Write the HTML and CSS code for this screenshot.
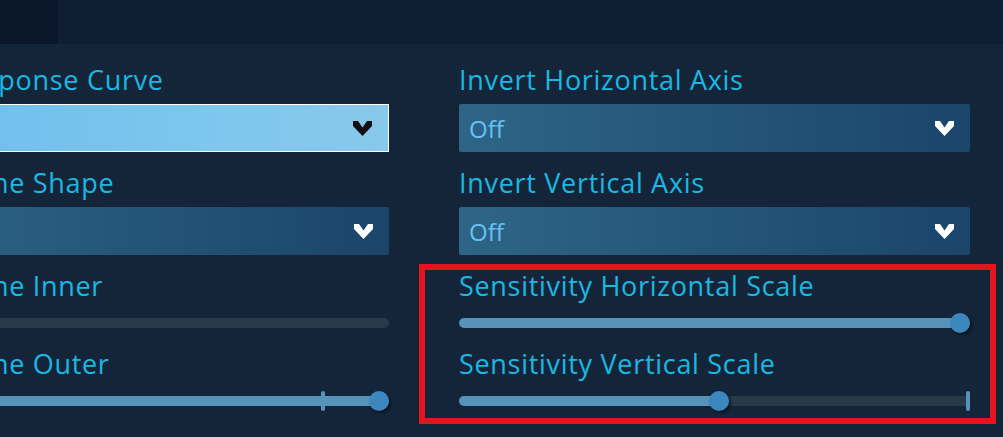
FILE: index.html
```html
<!DOCTYPE html>
<html lang="en">
  <head>
    <meta charset="UTF-8" />
    <title>Controller Settings</title>
    <link rel="stylesheet" href="styles.css">
  </head>
  <body>
    <div class="topbar">
      <div class="tab"></div>
    </div>

    <div class="settings">
      <!-- Left column -->
      <div class="column left">
        <div class="field">
          <div class="field-label">Stick Response Curve</div>
          <div class="dropdown active">
            <span class="dropdown-value"></span>
            <svg class="chevron" width="19" height="15" viewBox="0 0 19 15"><polygon points="0,0 5,0 9.5,6.5 14,0 19,0 19,5 9.5,15 0,5" /></svg>
          </div>
        </div>
        <div class="field">
          <div class="field-label">Dead Zone Shape</div>
          <div class="dropdown">
            <span class="dropdown-value"></span>
            <svg class="chevron" width="19" height="15" viewBox="0 0 19 15"><polygon points="0,0 5,0 9.5,6.5 14,0 19,0 19,5 9.5,15 0,5" /></svg>
          </div>
        </div>
        <div class="field">
          <div class="field-label">Dead Zone Inner</div>
          <div class="slider">
            <div class="track"></div>
          </div>
        </div>
        <div class="field">
          <div class="field-label">Dead Zone Outer</div>
          <div class="slider">
            <div class="track"><div class="fill" style="width: 100%"></div></div>
            <div class="tick" style="left: calc(0.884 * (100% - 20px))"></div>
            <div class="knob" style="left: calc(1 * (100% - 20px))"></div>
          </div>
        </div>
      </div>

      <!-- Right column -->
      <div class="column">
        <div class="field">
          <div class="field-label">Invert Horizontal Axis</div>
          <div class="dropdown">
            <span class="dropdown-value">Off</span>
            <svg class="chevron" width="19" height="15" viewBox="0 0 19 15"><polygon points="0,0 5,0 9.5,6.5 14,0 19,0 19,5 9.5,15 0,5" /></svg>
          </div>
        </div>
        <div class="field">
          <div class="field-label">Invert Vertical Axis</div>
          <div class="dropdown">
            <span class="dropdown-value">Off</span>
            <svg class="chevron" width="19" height="15" viewBox="0 0 19 15"><polygon points="0,0 5,0 9.5,6.5 14,0 19,0 19,5 9.5,15 0,5" /></svg>
          </div>
        </div>

        <!-- Highlighted group -->
        <div class="highlight">
          <div class="field">
            <div class="field-label">Sensitivity Horizontal Scale</div>
            <div class="slider">
              <div class="track"><div class="fill" style="width: 100%"></div></div>
              <div class="knob" style="left: calc(1 * (100% - 20px))"></div>
            </div>
          </div>
          <div class="field">
            <div class="field-label">Sensitivity Vertical Scale</div>
            <div class="slider">
              <div class="track"><div class="fill" style="width: 51%"></div></div>
              <div class="tick end"></div>
              <div class="knob" style="left: calc(0.509 * (100% - 20px))"></div>
            </div>
          </div>
        </div>
      </div>
    </div>
  </body>
</html>
```

FILE: styles.css
```css
body {
  margin: 0;
  background-color: #152539;
  font-family: "Open Sans", "Noto Sans", sans-serif;
}

.topbar {
  height: 45px;
  background-color: #0e1f33;
  border-bottom: 1px solid #13243a;
  box-sizing: border-box;
  display: flex;
}
.topbar .tab {
  width: 58px;
  background-color: #0a1629;
}

.settings {
  display: flex;
  gap: 70px;
  padding-top: 19px;
}

.column {
  width: 511px;
  display: flex;
  flex-direction: column;
  gap: 15px;
}
.column.left {
  width: 507px;
  margin-left: -118px;
}

.field-label {
  color: #1ab8e2;
  font-size: 27px;
  letter-spacing: 0.7px;
  line-height: 32px;
  white-space: nowrap;
}

/* Dropdowns */
.dropdown {
  margin-top: 8px;
  height: 48px;
  box-sizing: border-box;
  display: flex;
  align-items: center;
  justify-content: space-between;
  padding: 0 16px 0 10px;
  background: linear-gradient(90deg, #2e6586 0%, #1b456b 100%);
  border-radius: 2px;
}
.dropdown-value {
  color: #67c1f5;
  font-size: 24px;
}
.chevron polygon {
  fill: #ffffff;
}
.dropdown.active {
  background: linear-gradient(90deg, #6bbcec 0%, #7cc6ee 60%, #88c8ea 100%);
  border: 1px solid #ffffff;
  border-radius: 0;
}
.dropdown.active .chevron polygon {
  fill: #111111;
}

/* Sliders */
.slider {
  position: relative;
  height: 20px;
  margin-top: 11px;
  display: flex;
  align-items: center;
}
.track {
  flex: 1;
  height: 10px;
  border-radius: 5px;
  background-color: #283a49;
  overflow: hidden;
}
.fill {
  height: 100%;
  background-color: #5792bb;
}
.knob {
  position: absolute;
  top: 0;
  width: 20px;
  height: 20px;
  border-radius: 50%;
  background-color: #3d87bf;
  box-shadow: 2px 2px 3px rgba(0, 0, 0, 0.5);
}
.tick {
  position: absolute;
  top: 0;
  width: 4px;
  height: 20px;
  margin-left: 8px;
  border-radius: 2px;
  background-color: #5792bb;
}
.tick.end {
  right: 0;
  margin-left: 0;
}

/* Red annotation box */
.highlight {
  display: flex;
  flex-direction: column;
  gap: 15px;
  margin: -6px -26px 0 -40px;
  padding: 0 20px 7px 34px;
  border: 6px solid #e3161f;
}
```
